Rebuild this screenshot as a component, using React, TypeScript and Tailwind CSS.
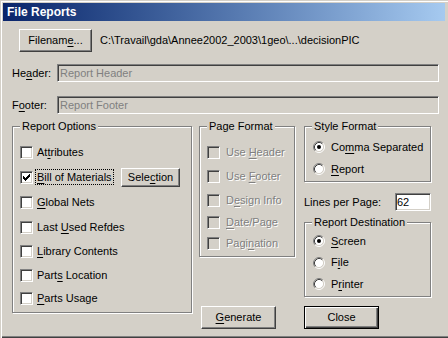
import React from "react";

const sunken =
  "border border-t-[#808080] border-l-[#808080] border-b-white border-r-white shadow-[inset_1px_1px_0_#404040,inset_-1px_-1px_0_#d4d0c8]";
const raised =
  "border border-t-white border-l-white border-b-[#404040] border-r-[#404040] shadow-[inset_-1px_-1px_0_#808080]";
const etched = "relative border border-[#808080] shadow-[1px_1px_0_#fff,inset_1px_1px_0_#fff]";
const disabledText = "text-[#808080] [text-shadow:1px_1px_0_#fff]";

function Label({ text, u, disabled }: { text: string; u: number; disabled?: boolean }) {
  return (
    <span className={`whitespace-pre ${disabled ? disabledText : ""}`}>
      {text.slice(0, u)}
      <span className="underline underline-offset-[2px]">{text[u]}</span>
      {text.slice(u + 1)}
    </span>
  );
}

function Checkbox({ checked, disabled }: { checked?: boolean; disabled?: boolean }) {
  return (
    <div className={`w-[13px] h-[13px] shrink-0 ${sunken} ${disabled ? "bg-[#d4d0c8]" : "bg-white"} flex items-center justify-center`}>
      {checked && (
        <svg width="9" height="9" viewBox="0 0 9 9" shapeRendering="crispEdges">
          <rect x="1" y="3" width="1" height="3" fill="#000" />
          <rect x="2" y="4" width="1" height="3" fill="#000" />
          <rect x="3" y="5" width="1" height="3" fill="#000" />
          <rect x="4" y="4" width="1" height="3" fill="#000" />
          <rect x="5" y="3" width="1" height="3" fill="#000" />
          <rect x="6" y="2" width="1" height="3" fill="#000" />
          <rect x="7" y="1" width="1" height="3" fill="#000" />
        </svg>
      )}
    </div>
  );
}

function Radio({ checked }: { checked?: boolean }) {
  return (
    <svg width="12" height="12" viewBox="0 0 12 12" className="shrink-0">
      <circle cx="6" cy="6" r="4.5" fill="#fff" />
      <path d="M2.11 9.89 A5.5 5.5 0 0 1 9.89 2.11" stroke="#808080" strokeWidth="1" fill="none" />
      <path d="M9.89 2.11 A5.5 5.5 0 0 1 2.11 9.89" stroke="#fff" strokeWidth="1" fill="none" />
      <path d="M2.82 9.18 A4.5 4.5 0 0 1 9.18 2.82" stroke="#404040" strokeWidth="1" fill="none" />
      <path d="M9.18 2.82 A4.5 4.5 0 0 1 2.82 9.18" stroke="#d4d0c8" strokeWidth="1" fill="none" />
      {checked && <circle cx="6" cy="6" r="2" fill="#000" />}
    </svg>
  );
}

function Legend({ text }: { text: string }) {
  return (
    <span className="absolute left-[7px] top-[-7px] px-[2px] bg-[#d4d0c8] leading-[13px] whitespace-pre">{text}</span>
  );
}

function Button({ children, def, className }: { children: React.ReactNode; def?: boolean; className: string }) {
  return (
    <div
      className={`${className} flex items-center justify-center ${
        def
          ? "border border-black shadow-[inset_1px_1px_0_#fff,inset_-1px_-1px_0_#404040,inset_-2px_-2px_0_#808080]"
          : raised
      }`}
    >
      {children}
    </div>
  );
}

export default function App() {
  return (
    <div className="w-[448px] h-[338px] bg-[#d4d0c8] overflow-hidden pt-[3px] pl-[3px] pr-[3px] text-[11px] leading-[13px] text-black font-['Liberation_Sans',Arial,sans-serif] shadow-[inset_1px_1px_0_#d4d0c8,inset_2px_2px_0_#fff,inset_0_-1px_0_#404040,inset_0_-2px_0_#808080]">
      {/* Title bar */}
      <div className="h-[18px] bg-linear-to-r from-[#0a246a] to-[#a6caf0] flex items-center pl-[4px] text-white font-bold text-[12px]">
        File Reports
      </div>

      {/* Filename row */}
      <div className="mt-[8px] pl-[16px] flex items-center h-[23px]">
        <Button className="w-[73px] h-[23px]">
          <Label text="Filename..." u={7} />
        </Button>
        <span className="ml-[8px] whitespace-pre">C:\Travail\gda\Annee2002_2003\1geo\...\decisionPIC</span>
      </div>

      {/* Header row */}
      <div className="mt-[12px] pl-[9px] flex items-center">
        <div className="w-[45px]">
          <Label text="Header:" u={2} />
        </div>
        <div className={`w-[382px] h-[18px] ${sunken} bg-[#d4d0c8] flex items-center pl-[2px] text-[#808080]`}>
          Report Header
        </div>
      </div>

      {/* Footer row */}
      <div className="mt-[14px] pl-[9px] flex items-center">
        <div className="w-[45px]">
          <Label text="Footer:" u={1} />
        </div>
        <div className={`w-[382px] h-[18px] ${sunken} bg-[#d4d0c8] flex items-center pl-[2px] text-[#808080]`}>
          Report Footer
        </div>
      </div>

      {/* Groups */}
      <div className="mt-[12px] flex items-start">
        {/* Report Options */}
        <div className={`${etched} ml-[9px] w-[180px] h-[187px] pt-[13px] pl-[7px]`}>
          <Legend text="Report Options" />
          <div className="flex flex-col">
            <div className="h-[25px] flex items-center">
              <Checkbox />
              <span className="ml-[4px]"><Label text="Attributes" u={2} /></span>
            </div>
            <div className="h-[25px] flex items-center">
              <Checkbox checked />
              <div className="w-[88px] pl-[3px]">
                <span className="outline outline-1 outline-dotted outline-black px-[1px] py-[1px]">
                  <Label text="Bill of Materials" u={0} />
                </span>
              </div>
              <Button className="w-[59px] h-[19px]">
                <Label text="Selection" u={4} />
              </Button>
            </div>
            <div className="h-[25px] flex items-center">
              <Checkbox />
              <span className="ml-[4px]"><Label text="Global Nets" u={0} /></span>
            </div>
            <div className="h-[24px] flex items-center">
              <Checkbox />
              <span className="ml-[4px]"><Label text="Last Used Refdes" u={5} /></span>
            </div>
            <div className="h-[24px] flex items-center">
              <Checkbox />
              <span className="ml-[4px]"><Label text="Library Contents" u={0} /></span>
            </div>
            <div className="h-[24px] flex items-center">
              <Checkbox />
              <span className="ml-[4px]"><Label text="Parts Location" u={4} /></span>
            </div>
            <div className="h-[23px] flex items-center">
              <Checkbox />
              <span className="ml-[4px]"><Label text="Parts Usage" u={0} /></span>
            </div>
          </div>
        </div>

        {/* Middle column */}
        <div className="ml-[7px] flex flex-col">
          <div className={`${etched} w-[96px] h-[131px] pt-[13px] pl-[7px]`}>
            <Legend text="Page Format" />
            <div className="flex flex-col">
              <div className="h-[24px] flex items-center">
                <Checkbox disabled />
                <span className="ml-[6px]"><Label text="Use Header" u={4} disabled /></span>
              </div>
              <div className="h-[24px] flex items-center">
                <Checkbox disabled />
                <span className="ml-[6px]"><Label text="Use Footer" u={4} disabled /></span>
              </div>
              <div className="h-[24px] flex items-center">
                <Checkbox disabled />
                <span className="ml-[6px]"><Label text="Design Info" u={1} disabled /></span>
              </div>
              <div className="h-[21px] flex items-center">
                <Checkbox disabled />
                <span className="ml-[6px]"><Label text="Date/Page" u={0} disabled /></span>
              </div>
              <div className="h-[21px] flex items-center">
                <Checkbox disabled />
                <span className="ml-[6px]"><Label text="Pagination" u={4} disabled /></span>
              </div>
            </div>
          </div>
          <Button className="mt-[49px] ml-[2px] w-[75px] h-[23px]">
            <Label text="Generate" u={0} />
          </Button>
        </div>

        {/* Right column */}
        <div className="ml-[9px] flex flex-col">
          <div className={`${etched} w-[127px] h-[56px] pt-[9px] pl-[8px]`}>
            <Legend text="Style Format" />
            <div className="h-[22px] flex items-center">
              <Radio checked />
              <span className="ml-[6px]"><Label text="Comma Separated" u={2} /></span>
            </div>
            <div className="h-[22px] flex items-center">
              <Radio />
              <span className="ml-[6px]"><Label text="Report" u={0} /></span>
            </div>
          </div>

          <div className="mt-[11px] w-[127px] flex items-center justify-between">
            <span>Lines per Page:</span>
            <div className={`w-[36px] h-[18px] ${sunken} bg-white flex items-center pl-[1px]`}>62</div>
          </div>

          <div className={`${etched} mt-[11px] w-[127px] h-[75px] pt-[7px] pl-[8px]`}>
            <Legend text="Report Destination" />
            <div className="h-[22px] flex items-center">
              <Radio checked />
              <span className="ml-[6px]"><Label text="Screen" u={0} /></span>
            </div>
            <div className="h-[21px] flex items-center">
              <Radio />
              <span className="ml-[6px]"><Label text="File" u={1} /></span>
            </div>
            <div className="h-[22px] flex items-center">
              <Radio />
              <span className="ml-[6px]"><Label text="Printer" u={1} /></span>
            </div>
          </div>

          <Button def className="mt-[9px] w-[75px] h-[23px]">
            Close
          </Button>
        </div>
      </div>
    </div>
  );
}
